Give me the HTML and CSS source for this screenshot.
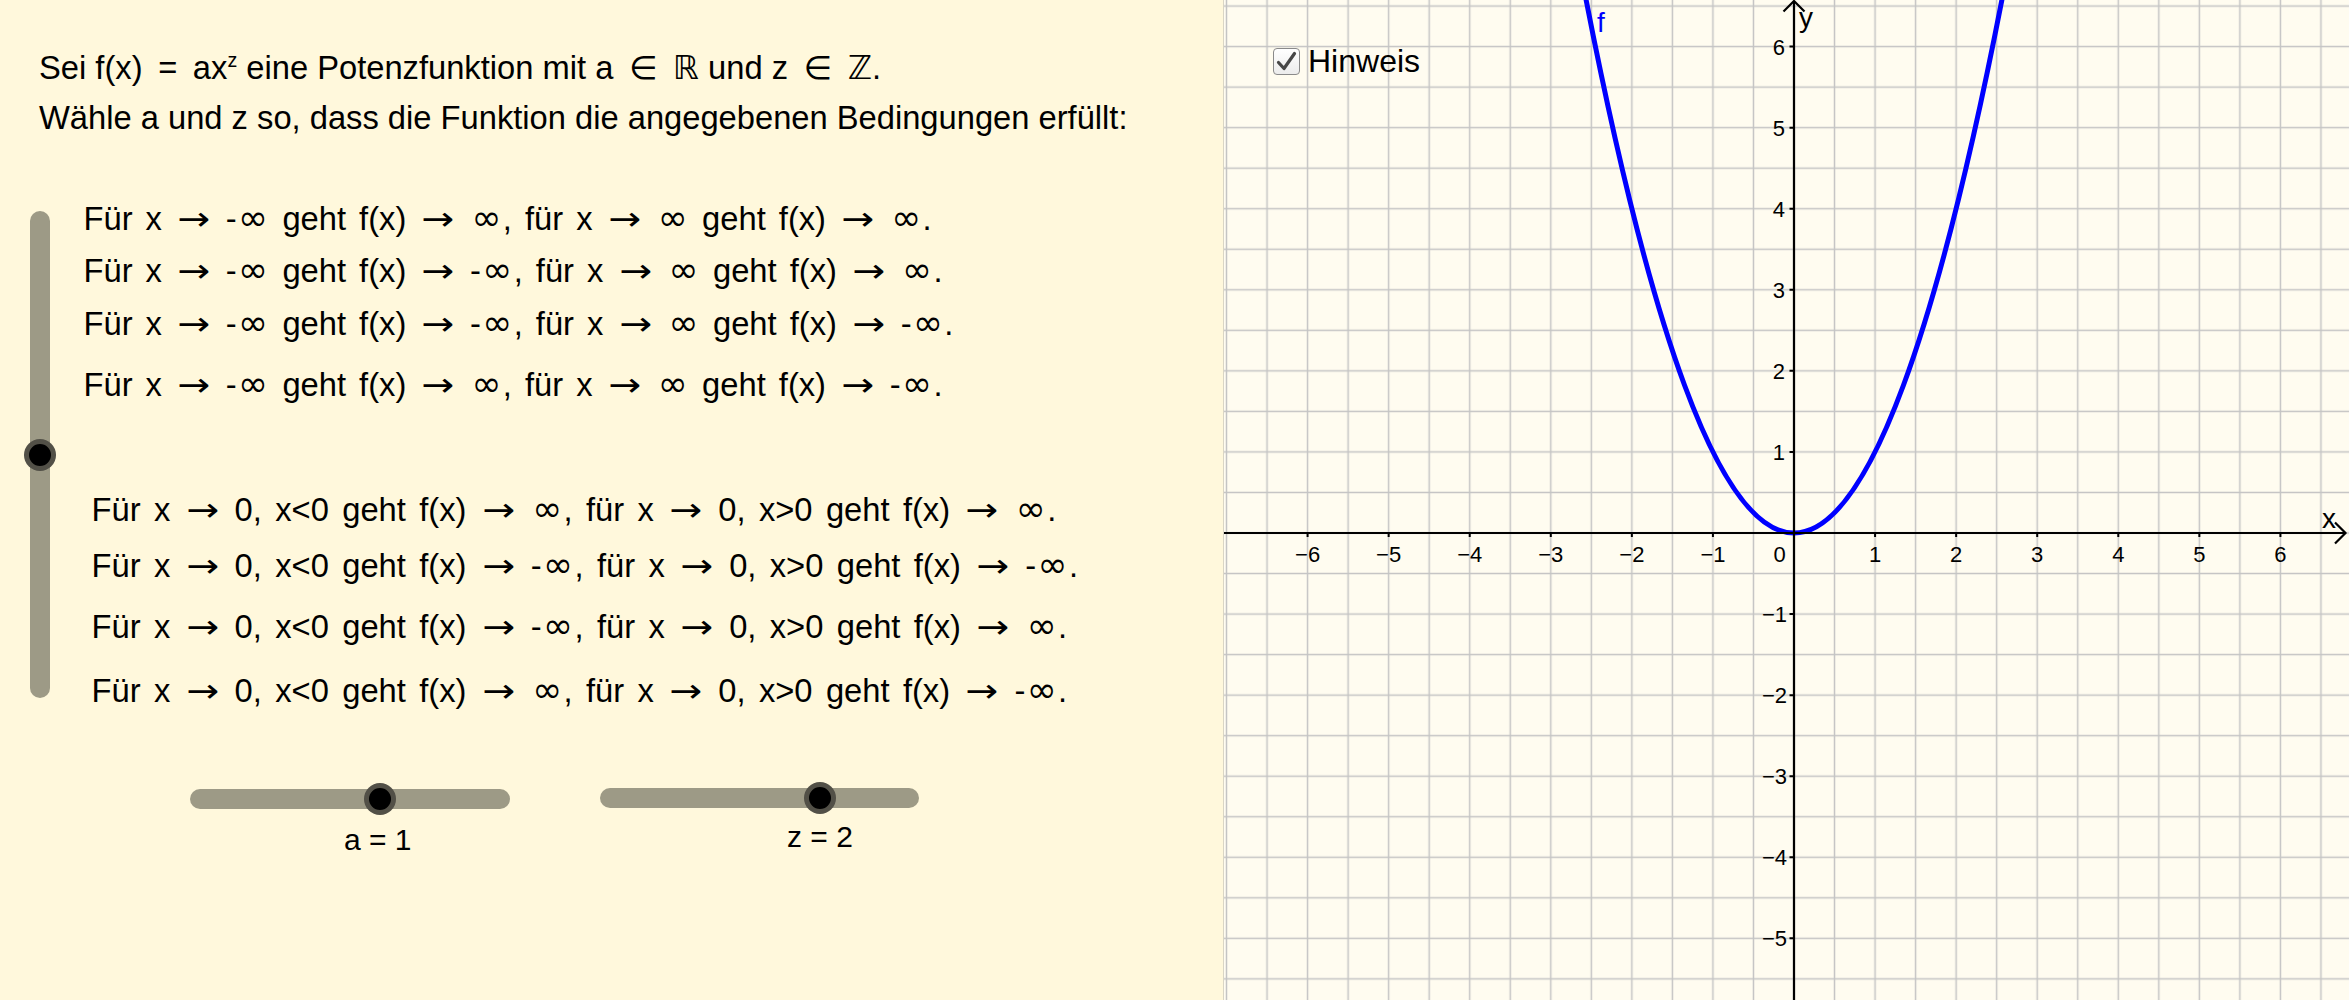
FILE: index.html
```html
<!DOCTYPE html>
<html lang="de">
<head>
<meta charset="utf-8">
<title>Potenzfunktion</title>
<link rel="stylesheet" href="styles.css">
</head>
<body>
<div class="app">
  <section class="left">
    <div class="intro">
      <p>Sei f(x) <span class="rel">=</span> ax<span class="sup">z</span> eine Potenzfunktion mit a <span class="rel sym">∈</span> <span class="sym">ℝ</span> und z <span class="rel sym">∈</span> <span class="sym">ℤ</span>.</p>
      <p>Wähle a und z so, dass die Funktion die angegebenen Bedingungen erfüllt:</p>
    </div>
    <div class="main">
      <div class="vtrack"><span class="knob"></span></div>
      <div class="rows">
        <div class="row r1">Für x <span class="ar">→</span> -<span class="inf">∞</span> geht f(x) <span class="ar">→</span> <span class="inf">∞</span>, für x <span class="ar">→</span> <span class="inf">∞</span> geht f(x) <span class="ar">→</span> <span class="inf">∞</span>.</div>
        <div class="row r2">Für x <span class="ar">→</span> -<span class="inf">∞</span> geht f(x) <span class="ar">→</span> -<span class="inf">∞</span>, für x <span class="ar">→</span> <span class="inf">∞</span> geht f(x) <span class="ar">→</span> <span class="inf">∞</span>.</div>
        <div class="row r3">Für x <span class="ar">→</span> -<span class="inf">∞</span> geht f(x) <span class="ar">→</span> -<span class="inf">∞</span>, für x <span class="ar">→</span> <span class="inf">∞</span> geht f(x) <span class="ar">→</span> -<span class="inf">∞</span>.</div>
        <div class="row r4">Für x <span class="ar">→</span> -<span class="inf">∞</span> geht f(x) <span class="ar">→</span> <span class="inf">∞</span>, für x <span class="ar">→</span> <span class="inf">∞</span> geht f(x) <span class="ar">→</span> -<span class="inf">∞</span>.</div>
        <div class="row g2 r5">Für x <span class="ar">→</span> 0, x&lt;0 geht f(x) <span class="ar">→</span> <span class="inf">∞</span>, für x <span class="ar">→</span> 0, x&gt;0 geht f(x) <span class="ar">→</span> <span class="inf">∞</span>.</div>
        <div class="row g2 r6">Für x <span class="ar">→</span> 0, x&lt;0 geht f(x) <span class="ar">→</span> -<span class="inf">∞</span>, für x <span class="ar">→</span> 0, x&gt;0 geht f(x) <span class="ar">→</span> -<span class="inf">∞</span>.</div>
        <div class="row g2 r7">Für x <span class="ar">→</span> 0, x&lt;0 geht f(x) <span class="ar">→</span> -<span class="inf">∞</span>, für x <span class="ar">→</span> 0, x&gt;0 geht f(x) <span class="ar">→</span> <span class="inf">∞</span>.</div>
        <div class="row g2 r8">Für x <span class="ar">→</span> 0, x&lt;0 geht f(x) <span class="ar">→</span> <span class="inf">∞</span>, für x <span class="ar">→</span> 0, x&gt;0 geht f(x) <span class="ar">→</span> -<span class="inf">∞</span>.</div>
      </div>
    </div>
    <div class="hsliders">
      <div class="hslider sa">
        <div class="htrack"><span class="knob"></span></div>
        <div class="val">a = 1</div>
      </div>
      <div class="hslider sz">
        <div class="htrack"><span class="knob"></span></div>
        <div class="val">z = 2</div>
      </div>
    </div>
  </section>

  <section class="graph">
    <svg class="plane" width="1125" height="1000" viewBox="0 0 1125 1000">
      <defs>
        <pattern id="grid" patternUnits="userSpaceOnUse" x="-17.7575" y="-14.2225" width="40.535" height="40.535">
          <path class="gridline" d="M20.2675 0V40.535M0 20.2675H40.535"/>
        </pattern>
      </defs>
      <rect width="1125" height="1000" fill="url(#grid)"/>
      <path class="curve" d="M351.11 -58 Q570 1124 788.89 -58"/>
      <path class="axis" d="M0 533H1122M570 1000V1.5"/>
      <path class="axis" d="M1111 522.5L1121.5 533L1111 543.5M559.5 11.5L570 1L580.5 11.5"/>
      <path class="tick" d="M83.58 533v4M164.65 533v4M245.72 533v4M326.79 533v4M407.86 533v4M488.93 533v4M651.07 533v4M732.14 533v4M813.21 533v4M894.28 533v4M975.35 533v4M1056.42 533v4M565.5 46.58h4.5M565.5 127.65h4.5M565.5 208.72h4.5M565.5 289.79h4.5M565.5 370.86h4.5M565.5 451.93h4.5M565.5 614.07h4.5M565.5 695.14h4.5M565.5 776.21h4.5M565.5 857.28h4.5M565.5 938.35h4.5"/>
      <g class="xl">
        <text x="83.58" y="562">−6</text>
        <text x="164.65" y="562">−5</text>
        <text x="245.72" y="562">−4</text>
        <text x="326.79" y="562">−3</text>
        <text x="407.86" y="562">−2</text>
        <text x="488.93" y="562">−1</text>
        <text x="555.5" y="562">0</text>
        <text x="651.07" y="562">1</text>
        <text x="732.14" y="562">2</text>
        <text x="813.21" y="562">3</text>
        <text x="894.28" y="562">4</text>
        <text x="975.35" y="562">5</text>
        <text x="1056.42" y="562">6</text>
      </g>
      <g class="yl">
        <text x="561" y="54.6">6</text>
        <text x="561" y="135.7">5</text>
        <text x="561" y="216.7">4</text>
        <text x="561" y="297.8">3</text>
        <text x="561" y="378.9">2</text>
        <text x="561" y="459.9">1</text>
        <text x="563" y="622.1">−1</text>
        <text x="563" y="703.1">−2</text>
        <text x="563" y="784.2">−3</text>
        <text x="563" y="865.3">−4</text>
        <text x="563" y="946.4">−5</text>
      </g>
      <text class="axname" x="575" y="27">y</text>
      <text class="axname" x="1098" y="528">x</text>
      <text class="fname" x="373" y="32">f</text>
    </svg>
    <label class="hint">
      <span class="cb"><svg width="24" height="24" viewBox="0 0 24 24"><path class="check" d="M3.5 12.5L9 18.5L19.5 3.5"/></svg></span>
      <span class="hint-text">Hinweis</span>
    </label>
  </section>
</div>
</body>
</html>
```

FILE: styles.css
```css
* { box-sizing: border-box; }

html, body {
  margin: 0;
  padding: 0;
}

body {
  width: 2349px;
  height: 1000px;
  overflow: hidden;
  font-family: "Liberation Sans", Arial, sans-serif;
  color: #000;
}

.app {
  display: flex;
  height: 1000px;
}

/* ---------- left panel ---------- */
.left {
  width: 1224px;
  flex: none;
  background: #FFF8DC;
  border-right: 1px solid #d9d5c5;
}

.intro {
  padding: 43px 0 0 39px;
  font-size: 32.7px;
  line-height: 49px;
}

.intro p {
  margin: 0;
  white-space: nowrap;
}

.rel { margin: 0 0.2em; }

.sym { font-family: "DejaVu Sans", sans-serif; }

.sup {
  font-size: 0.6em;
  vertical-align: 12px;
  line-height: 0;
}

.main {
  display: flex;
  align-items: flex-start;
  margin-top: 57px;
  padding-left: 30px;
}

.vtrack {
  position: relative;
  flex: none;
  width: 20px;
  height: 487px;
  margin-top: 12px;
  background: #9d9a86;
  border-radius: 10px;
}

.knob {
  position: absolute;
  width: 32px;
  height: 32px;
  border-radius: 50%;
  background: #000;
  border: 5px solid rgba(96, 94, 84, 0.85);
}

.vtrack .knob {
  left: -6px;
  top: 228px;
}

.rows {
  margin-left: 33.5px;
  font-size: 32.7px;
  line-height: 36px;
  word-spacing: 4px;
  white-space: nowrap;
}

.row { height: 36px; }
.row.g2 { padding-left: 8px; }
.r1 { margin-top: 0.65px; }
.r2 { margin-top: 16.6px; }
.r3 { margin-top: 16.4px; }
.r4 { margin-top: 25.5px; }
.r5 { margin-top: 88.85px; }
.r6 { margin-top: 20px; }
.r7 { margin-top: 25px; }
.r8 { margin-top: 28px; }

.g2 { word-spacing: 4.3px; }

.ar {
  display: inline-block;
  width: 1.15em;
  text-align: center;
  font-family: "DejaVu Sans", sans-serif;
  line-height: 1;
  word-spacing: 0;
  transform: scaleX(1.2);
}

.inf {
  display: inline-block;
  width: 0.91em;
  text-align: center;
  font-family: "DejaVu Sans", sans-serif;
  font-size: 1.1em;
  line-height: 1;
  word-spacing: 0;
}

.hsliders {
  display: flex;
  align-items: flex-start;
  gap: 90px;
  padding-left: 190px;
  margin-top: 80px;
}

.hslider.sa { width: 320px; margin-top: 1px; }
.hslider.sz { width: 319px; }

.htrack {
  position: relative;
  height: 20px;
  border-radius: 10px;
  background: #9d9a86;
}

.htrack .knob { top: -6px; }
.sa .knob { left: 174px; }
.sz .knob { left: 204px; }

.val {
  font-size: 30px;
  line-height: 34px;
  white-space: nowrap;
}

.sa .val { margin-top: 13.6px; padding-left: 154px; }
.sz .val { margin-top: 11.6px; padding-left: 187px; }

/* ---------- graph ---------- */
.graph {
  flex: 1;
  position: relative;
  background: #FFFCF0;
  overflow: hidden;
}

.plane { display: block; }

.gridline {
  fill: none;
  stroke: #c4c4c4;
  stroke-width: 1.5;
}

.curve {
  fill: none;
  stroke: #0000ff;
  stroke-width: 5;
}

.axis {
  fill: none;
  stroke: #000;
  stroke-width: 2.2;
}

.tick {
  fill: none;
  stroke: #000;
  stroke-width: 2;
}

.xl text,
.yl text {
  font-family: "Liberation Sans", Arial, sans-serif;
  font-size: 22px;
  fill: #000;
}

.xl text { text-anchor: middle; }
.yl text { text-anchor: end; }

.axname {
  font-family: "Liberation Sans", Arial, sans-serif;
  font-size: 28px;
  fill: #000;
}

.fname {
  font-family: "Liberation Sans", Arial, sans-serif;
  font-size: 28px;
  fill: #0000ff;
}

.hint {
  position: absolute;
  left: 49px;
  top: 43px;
  display: flex;
  align-items: center;
  gap: 8px;
  font-size: 32px;
  white-space: nowrap;
}

.cb {
  display: flex;
  align-items: center;
  justify-content: center;
  width: 27px;
  height: 27px;
  border: 1.5px solid #8a8a8a;
  border-radius: 4px;
  background: linear-gradient(#ffffff, #ececec);
}

.check {
  fill: none;
  stroke: #474747;
  stroke-width: 3.2;
  stroke-linecap: round;
  stroke-linejoin: round;
}
```
